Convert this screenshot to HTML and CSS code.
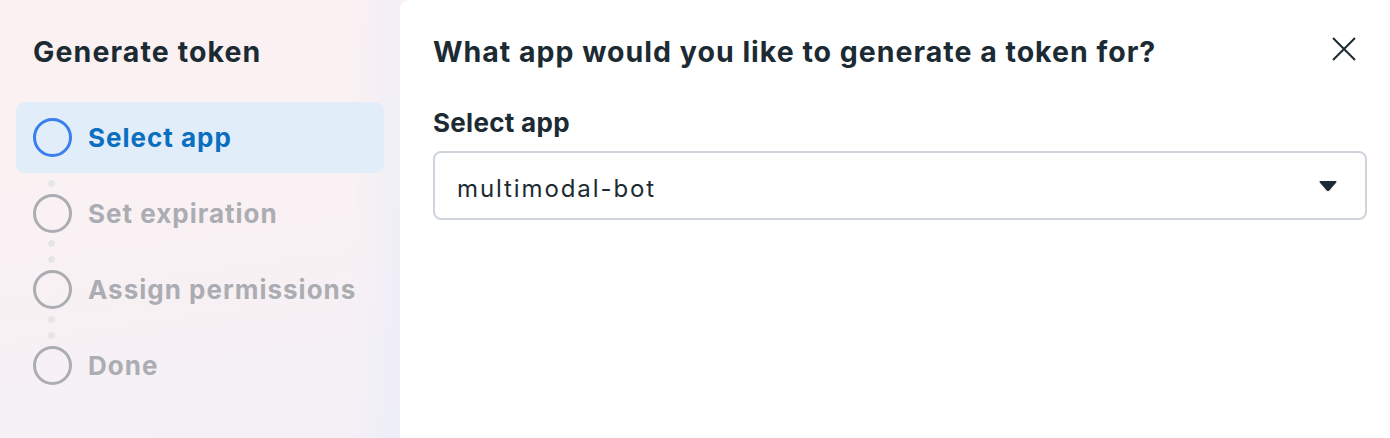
FILE: index.html
```html
<!DOCTYPE html>
<html>
<head>
<meta charset="utf-8">
<link rel="stylesheet" href="styles.css">
</head>
<body>
<div class="dialog">
  <aside class="sidebar">
    <h1 class="side-title">Generate token</h1>
    <ol class="steps">
      <li class="step active"><span class="ring"></span><span class="label">Select app</span></li>
      <li class="step"><span class="ring"></span><span class="label">Set expiration</span></li>
      <li class="step"><span class="ring"></span><span class="label">Assign permissions</span></li>
      <li class="step"><span class="ring"></span><span class="label">Done</span></li>
    </ol>
  </aside>
  <main class="content">
    <header class="head">
      <h2 class="title">What app would you like to generate a token for?</h2>
      <button class="close" aria-label="Close">
        <svg width="24" height="24" viewBox="0 0 24 24"><path d="M1 1 L23 23 M23 1 L1 23" stroke="#1c2b33" stroke-width="2" fill="none"/></svg>
      </button>
    </header>
    <label class="field-label">Select app</label>
    <div class="select">
      <span class="value">multimodal-bot</span>
      <svg class="caret" width="18" height="11" viewBox="0 0 18 11"><path d="M1.6 0 H16.4 Q18.4 0 17 1.7 L10.3 9.6 Q9 11 7.7 9.6 L1 1.7 Q-0.4 0 1.6 0 Z" fill="#1c2b33"/></svg>
    </div>
  </main>
</div>
</body>
</html>
```
FILE: styles.css
```css
* { box-sizing: border-box; }
html, body { margin: 0; padding: 0; }
body {
  width: 1390px;
  height: 438px;
  overflow: hidden;
  font-family: Inter, "Noto Sans", sans-serif;
  color: #1c2b33;
  background: #fff;
}
.dialog {
  display: flex;
  height: 438px;
  background: linear-gradient(172deg, #fbf1f2 0%, #f9f1f3 40%, #f0f0f8 100%);
}
.sidebar {
  width: 400px;
  flex: none;
  padding: 0 16px;
  background: linear-gradient(90deg, rgba(255,255,255,0) 0%, rgba(255,255,255,0) 88%, rgba(232,236,250,0.55) 100%);
}
.side-title {
  margin: 0;
  padding: 34px 0 0 17px;
  height: 102px;
  font-size: 28.5px;
  font-weight: 700;
  line-height: 36px;
  letter-spacing: 1.1px;
  color: #1c2b33;
}
.steps {
  list-style: none;
  margin: 0;
  padding: 0;
  display: flex;
  flex-direction: column;
  gap: 5px;
}
.step {
  position: relative;
  height: 71px;
  display: flex;
  align-items: center;
  gap: 16px;
  padding-left: 17px;
  border-radius: 9px;
  font-size: 26px;
  font-weight: 700;
  color: #abadb2;
  letter-spacing: 1px;
}
.step + .step::before,
.step + .step::after {
  content: "";
  position: absolute;
  left: 32px;
  width: 7px;
  height: 7px;
  border-radius: 50%;
  background: #e5e5ea;
}
.step + .step::before { top: -14px; }
.step + .step::after { top: 2px; }
.step.active {
  background: #e1edf8;
  color: #0b6fc0;
  z-index: 1;
}
.ring {
  width: 39px;
  height: 39px;
  border-radius: 50%;
  border: 3px solid #abadb2;
  flex: none;
}
.active .ring { border-color: #3a7ff0; }
.content {
  flex: 1;
  padding: 0 23px 0 33px;
  background: #fff;
  border-top-left-radius: 9px;
}
.head {
  display: flex;
  align-items: flex-start;
  justify-content: space-between;
  height: 102px;
  padding-top: 34px;
}
.title {
  margin: 0;
  font-size: 28.5px;
  line-height: 36px;
  font-weight: 700;
  letter-spacing: 1px;
  color: #1c2b33;
}
.close {
  border: 0;
  background: none;
  padding: 0;
  margin: 3px 11px 0 0;
  width: 24px;
  height: 24px;
  display: flex;
}
.field-label {
  display: block;
  font-size: 26px;
  font-weight: 700;
  line-height: 32px;
  letter-spacing: 0.3px;
  margin-top: 5px;
  color: #1c2b33;
}
.select {
  margin-top: 12px;
  height: 69px;
  border: 2px solid #cfd5dc;
  border-radius: 8px;
  display: flex;
  align-items: center;
  justify-content: space-between;
  padding: 5px 28px 0 22px;
}
.value {
  font-size: 24px;
  font-weight: 400;
  letter-spacing: 1.9px;
  color: #1c2b33;
}
.caret { display: block; margin-top: -3px; }
```
